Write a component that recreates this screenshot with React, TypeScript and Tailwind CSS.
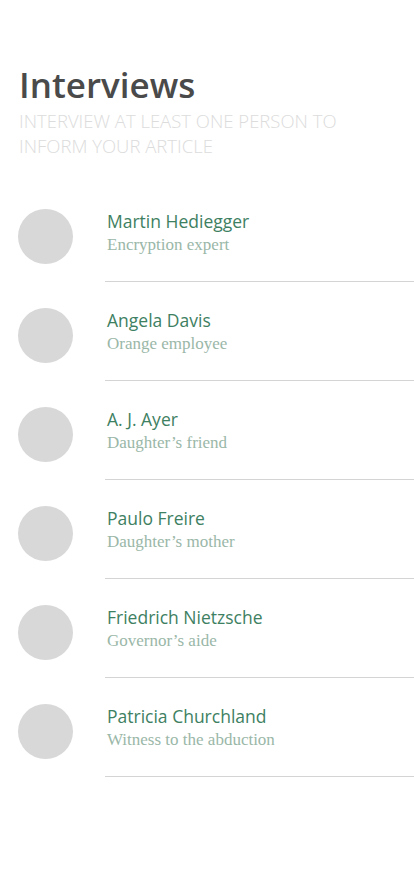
const people = [
  { name: "Martin Hediegger", role: "Encryption expert" },
  { name: "Angela Davis", role: "Orange employee" },
  { name: "A. J. Ayer", role: "Daughter’s friend" },
  { name: "Paulo Freire", role: "Daughter’s mother" },
  { name: "Friedrich Nietzsche", role: "Governor’s aide" },
  { name: "Patricia Churchland", role: "Witness to the abduction" },
];

function PersonRow({ name, role }: { name: string; role: string }) {
  return (
    <li className="flex flex-row items-start">
      <div className="w-[105px] shrink-0 pl-[18px] pt-[26px]">
        <div className="h-[55px] w-[55px] rounded-full bg-[#d8d8d8]" />
      </div>
      <div className="flex-1 border-b border-[#d4d4d4] pt-[26px] pb-[24px] pl-[2px]">
        <p className="font-['Open_Sans',sans-serif] text-[17.5px] leading-[24px] text-[#3e8062]">{name}</p>
        <p className="font-['Liberation_Serif',serif] text-[17px] leading-[24px] text-[#9ab7a8]">{role}</p>
      </div>
    </li>
  );
}

export default function App() {
  return (
    <div className="min-h-screen w-full bg-white pt-[62px]">
      <div className="pl-[19px] pr-[50px]">
        <h1 className="font-['Open_Sans',sans-serif] text-[35px] leading-[46px] font-semibold text-[#4a4a4a]">
          Interviews
        </h1>
        <p className="font-['Open_Sans',sans-serif] text-[18.5px] leading-[25px] font-light uppercase text-[#dcdcdc]">
          Interview at least one person to inform your article
        </p>
      </div>
      <ul className="mt-[25px]">
        {people.map((p) => (
          <PersonRow key={p.name} name={p.name} role={p.role} />
        ))}
      </ul>
    </div>
  );
}
